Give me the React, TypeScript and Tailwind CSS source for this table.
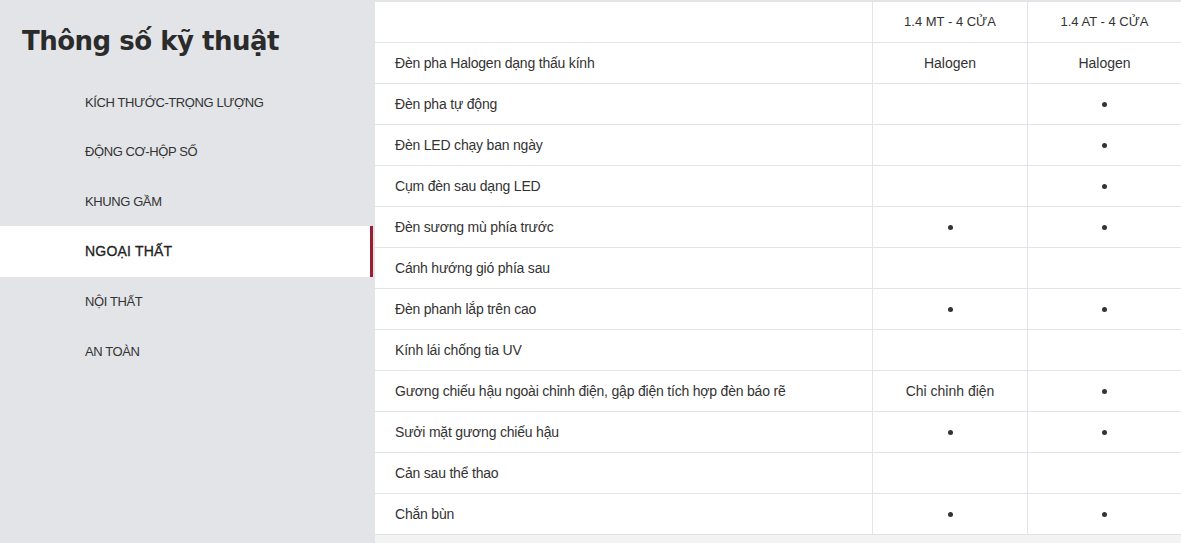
import React from "react";

const menu = [
  "KÍCH THƯỚC-TRỌNG LƯỢNG",
  "ĐỘNG CƠ-HỘP SỐ",
  "KHUNG GẦM",
  "NGOẠI THẤT",
  "NỘI THẤT",
  "AN TOÀN",
];

const D = "•";
const rows: [string, string, string][] = [
  ["Đèn pha Halogen dạng thấu kính", "Halogen", "Halogen"],
  ["Đèn pha tự động", "", D],
  ["Đèn LED chạy ban ngày", "", D],
  ["Cụm đèn sau dạng LED", "", D],
  ["Đèn sương mù phía trước", D, D],
  ["Cánh hướng gió phía sau", "", ""],
  ["Đèn phanh lắp trên cao", D, D],
  ["Kính lái chống tia UV", "", ""],
  ["Gương chiếu hậu ngoài chỉnh điện, gập điện tích hợp đèn báo rẽ", "Chỉ chỉnh điện", D],
  ["Sưởi mặt gương chiếu hậu", D, D],
  ["Cản sau thể thao", "", ""],
  ["Chắn bùn", D, D],
];

function Cell({ v }: { v: string }) {
  if (v === D) {
    return <span className="inline-block w-[5px] h-[5px] rounded-full bg-[#333]" />;
  }
  return <span>{v}</span>;
}

export default function App() {
  return (
    <div
      className="flex w-[1181px] h-[543px] overflow-hidden text-[#333]"
      style={{ fontFamily: "Tahoma, 'DejaVu Sans', 'Liberation Sans', sans-serif" }}
    >
      <aside className="w-[375px] shrink-0 bg-[#e2e4e8] flex flex-col">
        <h1
          className="pl-[22px] pt-[24px] text-[26px] font-bold leading-[34px] text-[#2b2b2b] tracking-[-0.5px]"
          style={{ fontFamily: "'DejaVu Sans', Verdana, sans-serif" }}
        >
          Thông số kỹ thuật
        </h1>
        <nav className="mt-[20px] flex flex-col">
          {menu.map((m) => {
            const active = m === "NGOẠI THẤT";
            return (
              <div
                key={m}
                className={
                  active
                    ? "relative h-[51px] mr-[2px] bg-white flex items-center pl-[85px] text-[14px] text-[#222]"
                    : "h-[49.4px] flex items-center pl-[85px] text-[13px] text-[#333]"
                }
                style={{ fontFamily: "'Liberation Sans', Arial, sans-serif" }}
              >
                {active ? <span className="font-normal tracking-[0.2px]" style={{ WebkitTextStroke: "0.3px #222" }}>{m}</span> : <span className="tracking-[-0.4px]">{m}</span>}
                {active && (
                  <span className="absolute right-0 top-0 h-full w-[3px] bg-[#9b1d30]" />
                )}
              </div>
            );
          })}
        </nav>
      </aside>
      <main className="flex-1 bg-[#f3f3f4] border-t-2 border-[#e2e4e8]">
        <div
          className="bg-white text-[14px]"
          style={{ fontFamily: "'Liberation Sans', Arial, sans-serif" }}
        >
          <div className="grid grid-cols-[497px_155px_154px] h-[41px] border-b border-[#e1e4e8]">
            <div />
            <div className="border-l border-[#e1e4e8] flex items-center justify-center text-[13px]">1.4 MT - 4 CỬA</div>
            <div className="border-l border-[#e1e4e8] flex items-center justify-center text-[13px]">1.4 AT - 4 CỬA</div>
          </div>
          {rows.map(([a, b, c], i) => (
            <div
              key={i}
              className="grid grid-cols-[497px_155px_154px] h-[41px] border-b border-[#e1e4e8]"
            >
              <div className="flex items-center pl-[20px] tracking-[-0.2px]">{a}</div>
              <div className="border-l border-[#e1e4e8] flex items-center justify-center">
                <Cell v={b} />
              </div>
              <div className="border-l border-[#e1e4e8] flex items-center justify-center">
                <Cell v={c} />
              </div>
            </div>
          ))}
        </div>
      </main>
    </div>
  );
}
